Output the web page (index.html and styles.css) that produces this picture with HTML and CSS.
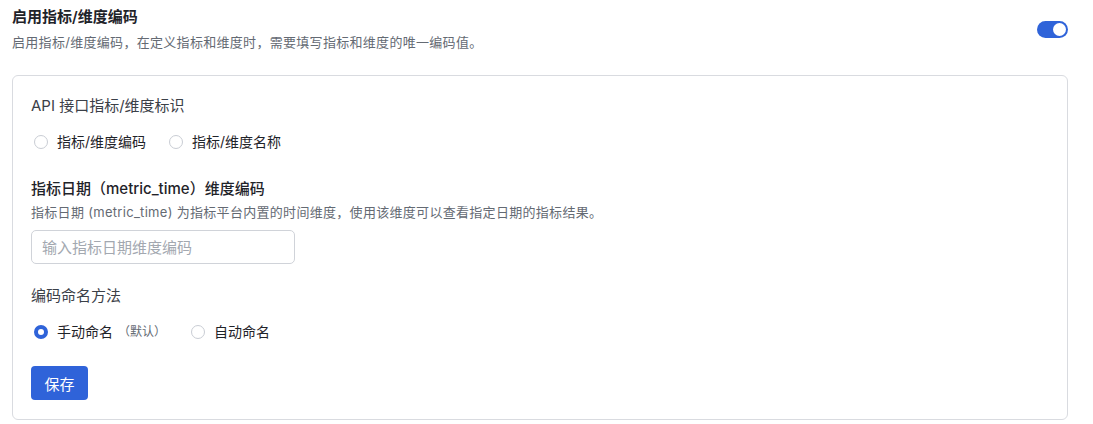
FILE: index.html
```html
<!DOCTYPE html>
<html lang="zh-CN">
<head>
<meta charset="UTF-8">
<title>指标/维度编码设置</title>
<link rel="stylesheet" href="styles.css">
</head>
<body>

<div class="settings">
  <div class="setting-header">
    <div>
      <div class="setting-title">启用指标/维度编码</div>
      <div class="setting-desc">启用指标/维度编码，在定义指标和维度时，需要填写指标和维度的唯一编码值。</div>
    </div>
    <label class="switch">
      <input type="checkbox" checked>
      <span class="slider"></span>
    </label>
  </div>

  <div class="card">
    <div class="field-label">API 接口指标/维度标识</div>
    <div class="radio-group">
      <label class="radio"><input type="radio" name="api_id"><span class="dot"></span>指标/维度编码</label>
      <label class="radio"><input type="radio" name="api_id"><span class="dot"></span>指标/维度名称</label>
    </div>

    <div class="field-label field-strong mt-section">指标日期（metric_time）维度编码</div>
    <div class="field-desc">指标日期 (metric_time) 为指标平台内置的时间维度，使用该维度可以查看指定日期的指标结果。</div>
    <input class="text-input" type="text" placeholder="输入指标日期维度编码">

    <div class="field-label mt-naming">编码命名方法</div>
    <div class="radio-group naming">
      <label class="radio"><input type="radio" name="naming" checked><span class="dot"></span>手动命名<span class="hint">（默认）</span></label>
      <label class="radio"><input type="radio" name="naming"><span class="dot"></span>自动命名</label>
    </div>

    <button class="btn-save">保存</button>
  </div>
</div>

</body>
</html>
```

FILE: styles.css
```css
body {
  margin: 0;
  font-family: Inter, "Noto Sans CJK SC", sans-serif;
  background: #fff;
  color: #1f2329;
}
.settings {
  padding: 6px 25px 0 12px;
}
.setting-header {
  display: flex;
  justify-content: space-between;
  align-items: flex-start;
}
.setting-title {
  font-size: 15px;
  line-height: 22px;
  font-weight: 600;
  color: #1f2329;
}
.setting-desc {
  font-size: 13px;
  line-height: 20px;
  margin-top: 4px;
  letter-spacing: 0.3px;
  color: #646a73;
}
/* toggle */
.switch {
  position: relative;
  display: inline-block;
  width: 31px;
  height: 17px;
  margin-top: 15px;
}
.switch input {
  display: none;
}
.slider {
  position: absolute;
  inset: 0;
  background: #2f63d9;
  border-radius: 9px;
}
.slider::after {
  content: "";
  position: absolute;
  top: 2px;
  left: 16px;
  width: 13px;
  height: 13px;
  border-radius: 50%;
  background: #fff;
}
.card {
  margin-top: 23px;
  border: 1px solid #d9dbe0;
  border-radius: 6px;
  padding: 19px 18px 19px 18px;
}
.field-label {
  font-size: 15px;
  line-height: 22px;
  color: #3b4048;
}
.field-strong {
  font-weight: 500;
  color: #1f2329;
}
.mt-section {
  margin-top: 25px;
}
.mt-naming {
  margin-top: 21px;
}
.field-desc {
  font-size: 13px;
  line-height: 20px;
  margin-top: 2px;
  letter-spacing: 0.3px;
  color: #646a73;
}
.radio-group {
  display: flex;
  gap: 20px;
  margin-top: 14px;
}
.radio-group.naming {
  margin-top: 14px;
  gap: 22px;
}
.radio {
  display: flex;
  align-items: center;
  font-size: 14px;
  line-height: 22px;
  color: #1f2329;
  cursor: pointer;
}
.radio input {
  display: none;
}
.dot {
  width: 12px;
  height: 12px;
  border: 1.5px solid #c9cdd4;
  border-radius: 50%;
  margin: 0 9px 0 3px;
  box-sizing: content-box;
  background: #fff;
}
.radio input:checked + .dot {
  width: 6px;
  height: 6px;
  border: 4.5px solid #2f63d9;
}
.hint {
  font-size: 12px;
  color: #646a73;
  margin-left: 5px;
}
.text-input {
  display: block;
  box-sizing: border-box;
  width: 264px;
  height: 34px;
  margin-top: 8px;
  padding: 0 10px;
  border: 1px solid #d0d3d9;
  border-radius: 5px;
  font-family: inherit;
  font-size: 15px;
  outline: none;
}
.text-input::placeholder {
  color: #a3a8b0;
}
.btn-save {
  display: block;
  margin-top: 23px;
  width: 57px;
  height: 34px;
  border: none;
  border-radius: 4px;
  background: #2f63d9;
  color: #fff;
  font-family: inherit;
  font-size: 15px;
  cursor: pointer;
}
```
